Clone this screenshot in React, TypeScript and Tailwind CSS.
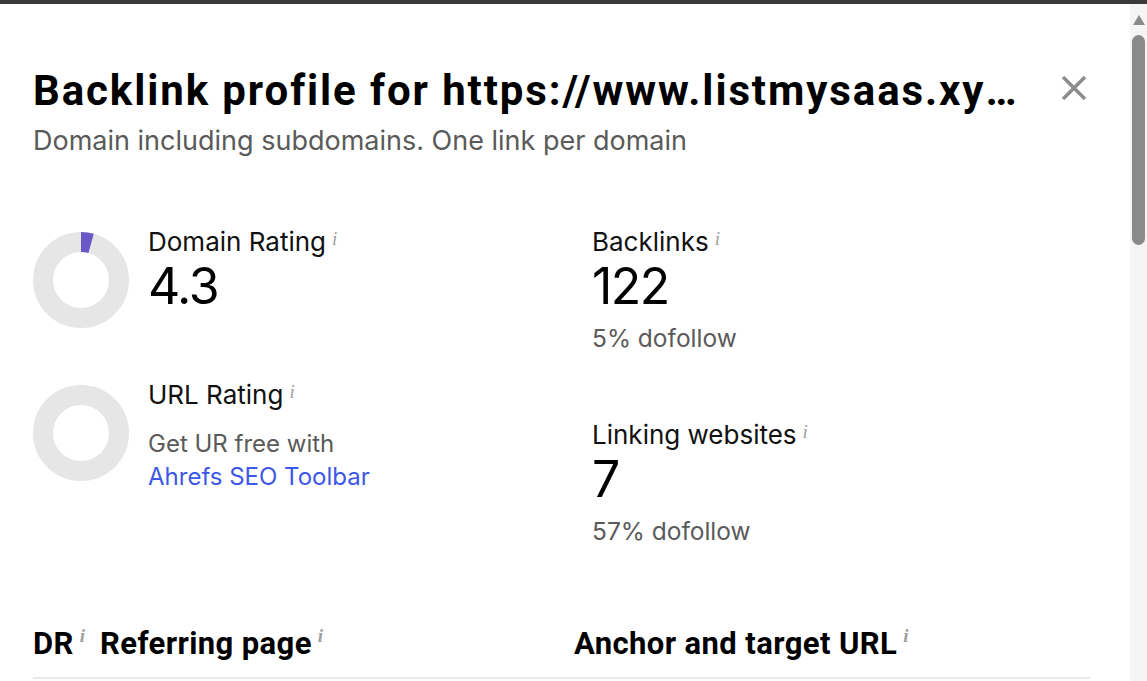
import React from "react";

const Info = () => (
  <span className="ml-[6px] align-top text-[19px] italic text-[#a0a0a0] leading-none [font-family:'Liberation_Serif',serif]">
    i
  </span>
);

const Donut = ({ value }: { value: number }) => {
  const r = 38;
  const c = 2 * Math.PI * r;
  const arc = (value / 100) * c;
  return (
    <svg width="96" height="96" viewBox="0 0 96 96" className="shrink-0">
      <circle cx="48" cy="48" r={r} fill="none" stroke="#e6e6e6" strokeWidth="20" />
      {value > 0 && (
        <circle
          cx="48"
          cy="48"
          r={r}
          fill="none"
          stroke="#6b58c7"
          strokeWidth="20"
          strokeDasharray={`${arc} ${c}`}
          transform="rotate(-90 48 48)"
        />
      )}
    </svg>
  );
};

const Label = ({ children }: { children: React.ReactNode }) => (
  <div className="-mt-[3px] text-[26px] leading-[26px] text-[#111]">
    {children}
    <Info />
  </div>
);

const Value = ({ children }: { children: React.ReactNode }) => (
  <div className="mt-[6px] text-[50px] leading-[50px] tracking-[-1.5px] text-black">{children}</div>
);

const Metric = ({
  label,
  value,
  sub,
}: {
  label: string;
  value: string;
  sub: string;
}) => (
  <div className="flex flex-col">
    <Label>{label}</Label>
    <Value>{value}</Value>
    <div className="mt-[12px] text-[24.5px] leading-[30px] text-[#5a5a5a]">{sub}</div>
  </div>
);

export default function App() {
  return (
    <div className="h-[681px] w-full overflow-hidden bg-white flex flex-col [font-family:Inter,'Noto_Sans',sans-serif]">
      <div className="h-[4px] bg-[#3a3a3c] shrink-0" />
      <div className="flex flex-1 min-h-0">
        <div className="flex-1 pl-[33px] pr-[40px] pt-[63px]">
          <div className="flex items-start justify-between">
            <h1 className="w-[986px] truncate text-[42px] leading-[48px] tracking-[1.9px] font-bold text-black [font-family:Roboto,sans-serif]">
              Backlink profile for https://www.listmysaas.xyz/
            </h1>
            <button className="mt-[7px] mr-[2px] text-[#8c8c8c]">
              <svg width="28" height="28" viewBox="0 0 28 28">
                <path d="M3 3 L25 25 M25 3 L3 25" stroke="currentColor" strokeWidth="3.5" />
              </svg>
            </button>
          </div>
          <p className="mt-[10px] text-[27px] leading-[32px] text-[#5a5a5a]">
            Domain including subdomains. One link per domain
          </p>

          <div className="mt-[75px] grid grid-cols-[559px_1fr]">
            <div className="flex flex-col gap-[57px]">
              <div className="flex gap-[19px]">
                <Donut value={4.3} />
                <div className="flex flex-col">
                  <Label>Domain Rating</Label>
                  <Value>4.3</Value>
                </div>
              </div>
              <div className="flex gap-[19px]">
                <Donut value={0} />
                <div className="flex flex-col">
                  <Label>URL Rating</Label>
                  <div className="mt-[19px] text-[24px] leading-[33px] text-[#5a5a5a]">
                    Get UR free with
                  </div>
                  <a className="text-[24px] leading-[33px] text-[#3d57e6]">Ahrefs SEO Toolbar</a>
                </div>
              </div>
            </div>
            <div className="flex flex-col gap-[72px]">
              <Metric label="Backlinks" value="122" sub="5% dofollow" />
              <Metric label="Linking websites" value="7" sub="57% dofollow" />
            </div>
          </div>

          <div className="mt-[80px] border-b-2 border-[#e8e8e8] pb-[15px] flex text-[31px] leading-[36px] tracking-[0.4px] font-bold text-black [font-family:Roboto,sans-serif]">
            <div className="w-[67px]">
              DR
              <Info />
            </div>
            <div className="w-[474px]">
              Referring page
              <Info />
            </div>
            <div>
              Anchor and target URL
              <Info />
            </div>
          </div>
        </div>
        <div className="w-[17px] shrink-0 bg-[#f5f5f5] flex flex-col items-center pt-[11px]">
          <div className="w-0 h-0 border-l-[6px] border-r-[6px] border-b-[10px] border-l-transparent border-r-transparent border-b-[#8a8a8a]" />
          <div className="mt-[10px] w-[13px] h-[210px] rounded-full bg-[#8a8a8a]" />
        </div>
      </div>
    </div>
  );
}
